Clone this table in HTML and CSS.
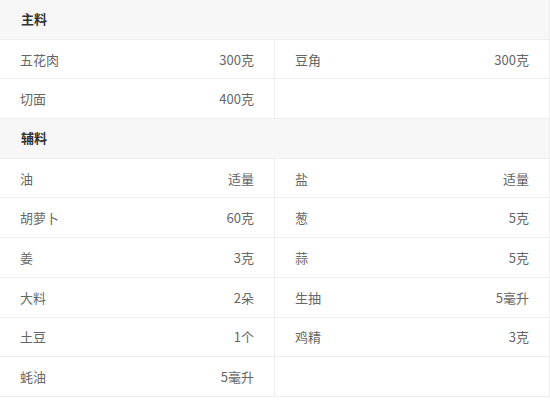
FILE: index.html
```html
<!DOCTYPE html>
<html lang="zh-CN">
<head>
<meta charset="utf-8">
<link rel="stylesheet" href="styles.css">
</head>
<body>
<div class="ingredients">
  <div class="section-title">主料</div>
  <div class="grid">
    <div class="cell"><span class="name">五花肉</span><span class="amount">300克</span></div>
    <div class="cell"><span class="name">豆角</span><span class="amount">300克</span></div>
    <div class="cell"><span class="name">切面</span><span class="amount">400克</span></div>
    <div class="cell"></div>
  </div>
  <div class="section-title">辅料</div>
  <div class="grid">
    <div class="cell"><span class="name">油</span><span class="amount">适量</span></div>
    <div class="cell"><span class="name">盐</span><span class="amount">适量</span></div>
    <div class="cell"><span class="name">胡萝卜</span><span class="amount">60克</span></div>
    <div class="cell"><span class="name">葱</span><span class="amount">5克</span></div>
    <div class="cell"><span class="name">姜</span><span class="amount">3克</span></div>
    <div class="cell"><span class="name">蒜</span><span class="amount">5克</span></div>
    <div class="cell"><span class="name">大料</span><span class="amount">2朵</span></div>
    <div class="cell"><span class="name">生抽</span><span class="amount">5毫升</span></div>
    <div class="cell"><span class="name">土豆</span><span class="amount">1个</span></div>
    <div class="cell"><span class="name">鸡精</span><span class="amount">3克</span></div>
    <div class="cell"><span class="name">蚝油</span><span class="amount">5毫升</span></div>
    <div class="cell"></div>
  </div>
</div>
</body>
</html>
```
FILE: styles.css
```css
html, body {
  margin: 0;
  padding: 0;
  background: #fff;
}
body {
  font-family: "Noto Sans CJK SC", "Microsoft YaHei", sans-serif;
  font-size: 13px;
  color: #666;
}
.ingredients {
  width: 550px;
}
.section-title {
  height: 38.7px;
  line-height: 38.7px;
  padding-left: 21px;
  background: #f7f7f7;
  border-bottom: 1px solid #eee;
  border-right: 1px solid #eee;
  font-weight: bold;
  color: #333;
}
.grid {
  display: grid;
  grid-template-columns: 274px 276px;
}
.cell {
  height: 38.7px;
  border-bottom: 1px solid #eee;
  display: flex;
  align-items: center;
  justify-content: space-between;
  padding: 0 20px;
  box-sizing: content-box;
}
.cell:nth-child(odd) {
  width: 234px;
}
.cell:nth-child(even) {
  width: 234px;
  border-left: 1px solid #eee;
  border-right: 1px solid #eee;
  padding-right: 20px;
}
.name {
  color: #666;
}
.amount {
  color: #666;
}
```
